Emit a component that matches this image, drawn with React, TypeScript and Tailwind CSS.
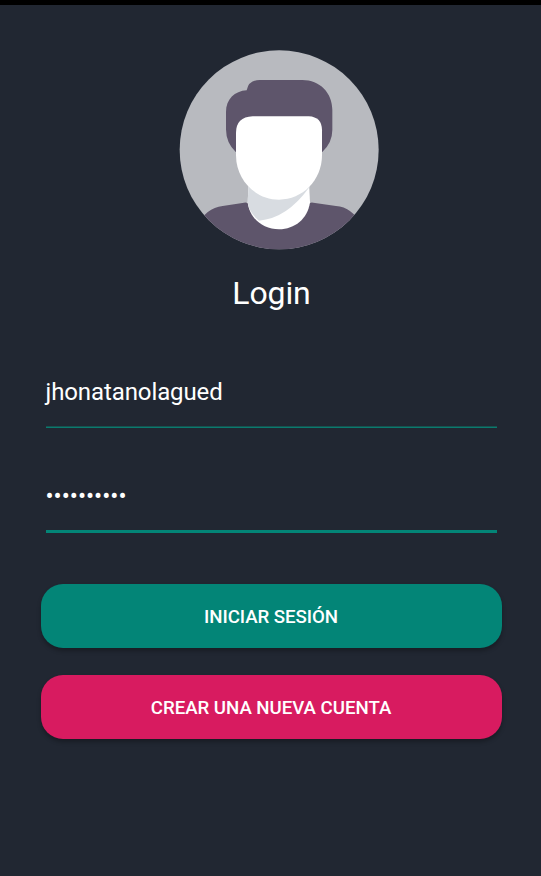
function Avatar() {
  return (
    <svg className="ml-[179px] h-[200px] w-[200px] shrink-0" viewBox="27 30 600 600" aria-hidden="true">
      <defs>
        <clipPath id="disc">
          <circle cx="327.5" cy="329.5" r="298.5" />
        </clipPath>
      </defs>
      <circle cx="327.5" cy="329.5" r="298.5" fill="#b8babf" />
      <g clipPath="url(#disc)">
        <path fill="#5e556b" d="M80 560 Q108 503 158 498 L222 488 Q233 486 236 493 H417 Q419 486 430 488 L498 498 Q545 500 580 560 V640 H80 Z" />
        <path fill="#fff" d="M236 430 H417 L420 487 C413 537 374 568 327 568 C279 568 238 535 233 487 Z" />
        <path fill="#d8dce1" d="M236 430 H418 V442 Q350 536 267 542 Q236 517 233 487 Z" />
      </g>
      <path fill="#5e556b" d="M230 151 Q236 120 269 120 H397 C449 120 487 158 487 210 V270 Q487 309 456 337 H198 Q168 309 168 268 V216 C168 178 194 153 230 151 Z" />
      <path fill="#fff" d="M248 229 H416 Q456 231 456 271 V346 C456 421 397 479 327 479 C257 479 198 421 198 346 V279 Q198 231 248 229 Z" />
    </svg>
  );
}

export default function App() {
  return (
    <main className="flex h-[876px] w-[541px] flex-col overflow-hidden border-t-[5px] border-black bg-[#212732] pt-[45px] font-['Roboto',sans-serif] text-white">
      <Avatar />
      <h1 className="mt-[23px] pl-[2px] text-center text-[32px] leading-[40px] tracking-[-0.1px]">Login</h1>
      <div className="ml-[45.5px] mt-[63px] w-[451px]">
        <span className="block h-[50px] text-[24px] leading-[32px] tracking-[-0.1px]">jhonatanolagued</span>
        <div className="h-px bg-[#17514f]" />
        <div className="h-px bg-[#0a7a6e]" />
      </div>
      <div className="ml-[45.5px] mt-[52px] h-[53px] w-[451px] border-b-[3px] border-[#038577]">
        <span className="block text-[24px] leading-[32px]">••••••••••</span>
      </div>
      <div className="ml-[40.5px] mt-[51px] flex w-[461px] flex-col gap-[27px]">
        <button className="h-[64px] rounded-[22px] bg-[#038577] pt-[2px] text-[18.7px] font-medium tracking-[-0.08px] shadow-[0_3px_4px_rgba(0,0,0,0.28)]">INICIAR SESIÓN</button>
        <button className="h-[64px] rounded-[22px] bg-[#d81b60] pt-[2px] text-[18.7px] font-medium tracking-[-0.04px] shadow-[0_3px_4px_rgba(0,0,0,0.28)]">CREAR UNA NUEVA CUENTA</button>
      </div>
    </main>
  );
}
